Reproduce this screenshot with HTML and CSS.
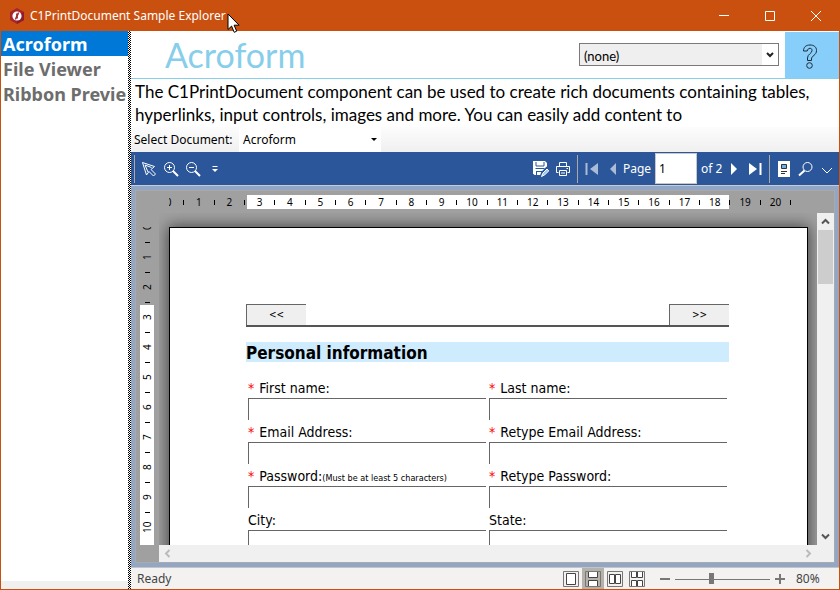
FILE: index.html
```html
<!DOCTYPE html>
<html lang="en">
<head>
<meta charset="utf-8">
<title>C1PrintDocument Sample Explorer</title>
<link rel="stylesheet" href="styles.css">
</head>
<body>
<div class="window">
  <header class="titlebar">
    <svg class="app-icon" width="14" height="16" viewBox="0 0 14 16"><path d="M7 0l7 4v8l-7 4-7-4V4z" fill="#a4262c"/><path d="M7 8l7-4v8l-7 4z" fill="#8c1c30"/><circle cx="7" cy="8" r="4.6" fill="#fff"/><path d="M8.6 4.6L7.2 8v2.4M5.4 11.4L6.8 8V5.6" stroke="#a4262c" stroke-width="1.4" fill="none"/></svg>
    <span class="title">C1PrintDocument Sample Explorer</span>
    <div class="caption-buttons">
      <button aria-label="Minimize"><svg width="12" height="12"><path d="M1 5.5h10" /></svg></button>
      <button aria-label="Maximize"><svg width="12" height="12"><path d="M1.5 1.5h9v9h-9z"/></svg></button>
      <button aria-label="Close"><svg width="12" height="12"><path d="M1 1l10 10M11 1L1 11"/></svg></button>
    </div>
    <svg class="cursor" width="14" height="21" viewBox="0 0 14 21"><path d="M1 1v15.5l3.6-3.4 2.6 6.2 2.5-1.1-2.6-6h5z" fill="#fff" stroke="#000"/></svg>
  </header>

  <div class="body">
    <nav class="samples">
      <a class="sample selected" href="#">Acroform</a>
      <a class="sample" href="#">File Viewer</a>
      <a class="sample" href="#">Ribbon Previe</a>
    </nav>
    <div class="splitter"></div>

    <main class="main">
      <div class="heading">
        <h1>Acroform</h1>
        <select class="theme" aria-label="Theme"><option>(none)</option></select>
        <button class="help" aria-label="Help"><svg width="16" height="26" viewBox="0 0 16 26"><path d="M1.500 7C1.500 3 4 1 8 1s6.500 2 6.500 5.500c0 5-5 5-5 8.500v1.500h-4V14c0-4 4.500-4.500 4.500-7.500C10 5 9.300 4.300 8 4.300S5.500 5.200 5.200 7z"/><circle cx="7.500" cy="21.500" r="2.800"/></svg></button>
      </div>
      <p class="description">The C1PrintDocument component can be used to create rich documents containing tables, hyperlinks, input controls, images and more. You can easily add content to</p>
      <div class="picker">
        <label for="doc">Select Document:</label>
        <select id="doc"><option>Acroform</option></select>
      </div>

      <div class="toolbar">
        <span class="grip"></span>
        <button aria-label="Select"><svg width="16" height="16" viewBox="0 0 16 16"><path d="M1.500 1.500l12 4-3.500 3 4.500 4.500-2 2L8 10.500 5.500 14z"/><path d="M4 4l3 7M4 4l6.500 2.500"/></svg></button>
        <button aria-label="Zoom in"><svg width="16" height="16" viewBox="0 0 16 16"><circle cx="6.500" cy="6.500" r="5"/><path d="M10 10l5 5" stroke-width="2"/><path d="M4 6.500h5M6.500 4v5"/></svg></button>
        <button aria-label="Zoom out"><svg width="16" height="16" viewBox="0 0 16 16"><circle cx="6.500" cy="6.500" r="5"/><path d="M10 10l5 5" stroke-width="2"/><path d="M4 6.500h5"/></svg></button>
        <button aria-label="More tools"><svg width="6" height="8" viewBox="0 0 6 8"><path d="M.5 1.500h5"/><path class="solid" d="M0 4h6L3 7z"/></svg></button>
        <span class="spacer"></span>
        <button aria-label="Save"><svg width="16" height="16" viewBox="0 0 16 16"><path class="solid" d="M0 0h12l2 2v6l-5 6H1.500L0 12.500z"/><path d="M3 1v4h8V1M2.500 7.500h9M3.500 10v4M3.500 10.500h6" stroke="#2b579a"/><path d="M9 15l1-3 5-5" stroke="#2b579a" stroke-width="4"/><path d="M8.500 15.500l1.500-3.500L14 8l1.800 1.800-4 4z" class="pencil"/></svg></button>
        <button aria-label="Print"><svg width="16" height="16" viewBox="0 0 16 16"><path d="M4.500 5V1.500h7V5M3.500 11.500h-2v-6h13v6h-2M4.500 9.500h7v5h-7zM6 12h4M11.500 7.500h1.500"/></svg></button>
        <span class="separator"></span>
        <button aria-label="First page" disabled><svg width="14" height="12" viewBox="0 0 14 12"><path d="M1.500 0v12" stroke-width="2"/><path class="solid" d="M13 0v12L5 6z"/></svg></button>
        <button class="narrow" aria-label="Previous page" disabled><svg width="8" height="12" viewBox="0 0 8 12"><path class="solid" d="M7 0v12L1 6z"/></svg></button>
        <label for="page">Page</label>
        <input id="page" type="text" value="1">
        <span class="count">of 2</span>
        <button class="narrow" aria-label="Next page"><svg width="8" height="12" viewBox="0 0 8 12"><path class="solid" d="M1 0v12l6-6z"/></svg></button>
        <button aria-label="Last page"><svg width="14" height="12" viewBox="0 0 14 12"><path d="M12.500 0v12" stroke-width="2"/><path class="solid" d="M1 0v12l8-6z"/></svg></button>
        <span class="separator"></span>
        <button aria-label="Thumbnails"><svg width="12" height="16" viewBox="0 0 12 16"><path class="solid" d="M0 0h12v16H0z"/><path d="M3.500 3.500h5v4h-5z" stroke="#333" fill="#6db2e8"/><path d="M3 10.500h6M3 12.500h4" stroke="#333"/></svg></button>
        <button aria-label="Find"><svg width="16" height="16" viewBox="0 0 16 16"><circle cx="9.500" cy="6" r="4.500"/><path d="M6.500 9.500L1 14.500" stroke-width="2"/></svg></button>
        <button class="narrow low" aria-label="More"><svg width="12" height="7" viewBox="0 0 12 7"><path d="M1 1l5 5 5-5"/></svg></button>
      </div>

      <div class="viewer">
        <div class="frame">
          <div class="ruler-x"><div class="marks">
            <b>0</b><i></i><b>1</b><i></i><b>2</b><i></i><b>3</b><i></i><b>4</b><i></i><b>5</b><i></i><b>6</b><i></i><b>7</b><i></i><b>8</b><i></i><b>9</b><i></i><b>10</b><i></i><b>11</b><i></i><b>12</b><i></i><b>13</b><i></i><b>14</b><i></i><b>15</b><i></i><b>16</b><i></i><b>17</b><i></i><b>18</b><i></i><b>19</b><i></i><b>20</b><i></i>
          </div></div>
          <div class="ruler-y"><div class="marks">
            <b>0</b><i></i><b>1</b><i></i><b>2</b><i></i><b>3</b><i></i><b>4</b><i></i><b>5</b><i></i><b>6</b><i></i><b>7</b><i></i><b>8</b><i></i><b>9</b><i></i><b>10</b>
          </div></div>
          <div class="canvas">
            <article class="page">
              <div class="pager"><button>&lt;&lt;</button><button>&gt;&gt;</button></div>
              <h2>Personal information</h2>
              <form class="fields">
                <div class="field"><label for="f1"><em>*</em> First name:</label><input id="f1" type="text"></div>
                <div class="field"><label for="f2"><em>*</em> Last name:</label><input id="f2" type="text"></div>
                <div class="field"><label for="f3"><em>*</em> Email Address:</label><input id="f3" type="text"></div>
                <div class="field"><label for="f4"><em>*</em> Retype Email Address:</label><input id="f4" type="text"></div>
                <div class="field"><label for="f5"><em>*</em> Password:<small>(Must be at least 5 characters)</small></label><input id="f5" type="password"></div>
                <div class="field"><label for="f6"><em>*</em> Retype Password:</label><input id="f6" type="password"></div>
                <div class="field"><label for="f7">City:</label><input id="f7" type="text"></div>
                <div class="field"><label for="f8">State:</label><input id="f8" type="text"></div>
              </form>
            </article>
          </div>
          <div class="scroll-y">
            <button aria-label="Scroll up"><svg width="9" height="7" viewBox="0 0 9 7"><path d="M1 5.500L4.500 2 8 5.500"/></svg></button>
            <span class="thumb"></span>
            <button aria-label="Scroll down"><svg width="9" height="7" viewBox="0 0 9 7"><path d="M1 1.500L4.500 5 8 1.500"/></svg></button>
          </div>
          <div class="scroll-x">
            <button aria-label="Scroll left"><svg width="7" height="9" viewBox="0 0 7 9"><path d="M5.500 1L2 4.500 5.500 8"/></svg></button>
            <button aria-label="Scroll right"><svg width="7" height="9" viewBox="0 0 7 9"><path d="M1.500 1L5 4.500 1.500 8"/></svg></button>
          </div>
        </div>
      </div>

      <footer class="status">
        <span class="ready">Ready</span>
        <button aria-label="Single page"><svg width="16" height="16" viewBox="0 0 16 16"><path class="box" d="M.5 .5h15v15H.5z"/><path class="sheet" d="M3.500 2.500h9v11h-9z"/></svg></button>
        <button class="on" aria-label="Continuous"><svg width="16" height="16" viewBox="0 0 16 16"><path class="box" d="M.5 .5h15v15H.5z"/><path class="sheet" d="M3.500 1v5.500h9V1M3.500 15V9.500h9V15"/></svg></button>
        <button aria-label="Facing pages"><svg width="16" height="16" viewBox="0 0 16 16"><path class="box" d="M.5 .5h15v15H.5z"/><path class="sheet" d="M2.500 3.500h5v9h-5zM8.500 3.500h5v9h-5z"/></svg></button>
        <button aria-label="Facing continuous"><svg width="16" height="16" viewBox="0 0 16 16"><path class="box" d="M.5 .5h15v15H.5z"/><path class="sheet" d="M2.500 1v5.500h5V1M8.500 1v5.500h5V1M2.500 15V9.500h5V15M8.500 15V9.500h5V15"/></svg></button>
        <span class="zoom">
          <button aria-label="Zoom out"><svg width="10" height="10"><path class="sign" d="M0 5h10"/></svg></button>
          <input type="range" min="0" max="100" value="38" aria-label="Zoom">
          <button aria-label="Zoom in"><svg width="10" height="10"><path class="sign" d="M0 5h10M5 0v10"/></svg></button>
          <span class="percent">80%</span>
        </span>
      </footer>
    </main>
  </div>
</div>
</body>
</html>
```
FILE: styles.css
```css
* { box-sizing: border-box; }
html, body { height: 100%; margin: 0; }
body { font: 12px/16px "Noto Sans", sans-serif; color: #000; overflow: hidden; }
button { padding: 0; border: 0; background: none; font: inherit; color: inherit; display: flex; align-items: center; justify-content: center; }
svg { display: block; fill: none; }

.window { height: 100vh; display: flex; flex-direction: column; border: 1px solid #c8510f; border-top: 0; background: #f0f0f0; }

.titlebar { position: relative; flex: none; height: 31px; display: flex; align-items: center; padding-left: 9px; background: #ca5010; color: #fff; }
.title { flex: 1; margin-left: 6px; padding-top: 1px; }
.caption-buttons { display: flex; height: 100%; }
.caption-buttons button { width: 46px; }
.caption-buttons svg { stroke: #fff; }
.cursor { position: absolute; left: 226px; top: 13px; z-index: 2; }

.body { flex: 1; min-height: 0; display: flex; }
.samples { width: 127px; margin-bottom: 8px; background: #fff; overflow: hidden; }
.sample { display: block; height: 25px; padding-left: 2px; font: bold 18px/27px "Noto Sans", sans-serif; color: #6d6d6d; text-decoration: none; white-space: nowrap; }
.sample.selected { background: #0078d7; color: #fff; }
.splitter { width: 3px; background: repeating-conic-gradient(#000 0 25%, #fff 0 50%) 0 0 / 2px 2px; }

.main { flex: 1; min-width: 0; display: flex; flex-direction: column; background: #fff; }
.heading { flex: none; height: 48px; display: flex; align-items: center; border-bottom: 1px solid #87ceeb; }
.heading h1 { flex: 1; margin: 0 0 0 34px; font: 34px/40px Lato, sans-serif; color: #87ceeb; }
.theme { appearance: none; width: 200px; height: 23px; margin-right: 6px; padding: 2px 4px 0; border: 1px solid #7a7a7a; border-radius: 0; font: 13px/18px Lato, sans-serif; color: #000;
  background: url("data:image/svg+xml,%3Csvg xmlns='http://www.w3.org/2000/svg' width='16' height='21'%3E%3Cpath fill='%23fff' d='M0 0h16v21H0z'/%3E%3Cpath d='M5 9l3 3 3-3' fill='none' stroke='%23222' stroke-width='2'/%3E%3C/svg%3E") right center no-repeat #efefef; }
.help { width: 54px; height: 46px; padding: 4px 4px 0 0; background: #87cefa; }
.help svg { stroke: #1d2b38; }

.description { flex: none; height: 48px; margin: 0; padding: 1px 4px 0; font: 17px/23px Lato, sans-serif; }
.picker { flex: none; height: 25px; display: flex; align-items: center; background: linear-gradient(#fcfcfc, #f0f0f0); }
.picker label { width: 108px; padding-left: 3px; white-space: nowrap; }
.picker select { appearance: none; width: 142px; height: 25px; border: 0; padding: 0 4px; font: inherit;
  background: url("data:image/svg+xml,%3Csvg xmlns='http://www.w3.org/2000/svg' width='12' height='6'%3E%3Cpath d='M2 1h6L5 4z'/%3E%3C/svg%3E") right center no-repeat #fff; }

.toolbar { flex: none; height: 34px; display: flex; align-items: center; padding: 0 2px 0 3px; background: #2b579a; border-bottom: 1px solid #c8ccd2; color: #fff; }
.toolbar button { width: 22px; height: 32px; flex: none; }
.toolbar .narrow { width: 20px; }
.toolbar .low { padding-top: 4px; }
.toolbar svg { stroke: #fff; }
.toolbar .solid { fill: #fff; stroke: none; }
.toolbar .pencil { fill: #9cc8ee; stroke: #fff; }
.toolbar button:disabled { opacity: .6; }
.toolbar label { width: 32px; }
.toolbar input { width: 42px; height: 31px; padding: 0 3px; border: 1px solid #c8c8c8; font: inherit; }
.count { width: 27px; padding-left: 4px; white-space: nowrap; }
.spacer { flex: 1; }
.grip, .separator { width: 1px; height: 28px; background: #a9a9a9; }
.grip { margin-right: 3px; }
.separator { margin: 0 3px; }

.viewer { flex: 1; min-height: 0; padding: 4px; background: #92a7c6; display: flex; border-bottom: 1px solid #c4c4c4; }
.frame { flex: 1; min-width: 0; display: grid; grid-template: 22px minmax(0, 1fr) 17px / 23px minmax(0, 1fr) 17px; border: 1px solid #aaa; background: #a0a0a0; }
.ruler-x { grid-area: 1 / 2 / 2 / 4; padding: 4px 36px 4px 10px; overflow: hidden; }
.ruler-x .marks { display: flex; height: 14px; overflow: hidden; background: linear-gradient(#fff, #fff) 78px 0 / 482px 100% no-repeat; }
.marks { font-size: 10px; line-height: 14px; }
.marks b { font-weight: normal; display: flex; justify-content: center; }
.marks > :first-child { margin: 0 0 0 -8px; }
.ruler-x b, .ruler-x i { flex: 1; width: 0; }
.ruler-x i::after { content: ""; display: block; width: 1px; height: 5px; margin: 5px auto 0; background: #000; }
.ruler-y { grid-area: 2 / 1 / 3 / 2; padding: 14px 5px 0 4px; overflow: hidden; }
.ruler-y .marks { display: flex; flex-direction: column; height: 100%; overflow: hidden; background: linear-gradient(#fff, #fff) 0 78px / 100% 100% no-repeat; }
.ruler-y .marks > :first-child { margin: -7px 0 0; }
.ruler-y b { flex: none; writing-mode: vertical-rl; transform: rotate(180deg); height: 15px; line-height: 14px; }
.ruler-y i { flex: none; height: 15px; }
.ruler-y i::after { content: ""; display: block; width: 5px; height: 1px; margin: 7px auto 0; background: #000; }

.canvas { grid-area: 2 / 2 / 3 / 3; padding: 14px 9px 0 10px; overflow: hidden; }
.page { height: 900px; padding: 76px 78px 0 76px; border: 1px solid #000; background: #fff; box-shadow: 0 0 14px 1px #444; font: 14px/20px "DejaVu Sans Condensed", sans-serif; }
.pager { display: flex; justify-content: space-between; height: 23px; border-bottom: 2px solid #555; }
.pager button { width: 60px; background: #efefef; border-top: 1px solid #666; border-left: 1px solid #666; font-size: 10px; }
.page h2 { margin: 15px 0 16px; height: 20px; background: #cfecff; font: bold 17px/22px "DejaVu Sans Condensed", sans-serif; }
.fields { display: grid; grid-template-columns: 1fr 1fr; column-gap: 3px; padding: 0 2px 0 2px; }
.field { height: 44px; }
.field label { display: block; height: 20px; line-height: 20px; white-space: nowrap; }
.field em { padding: 0 1px 0 0; font-style: normal; color: #f00; }
.field small { font-size: 9px; }
.field input { display: block; width: 100%; height: 22px; padding: 0 4px; border: solid #666; border-width: 1px 0 0 1px; font: inherit; }

.scroll-y { grid-area: 2 / 3 / 3 / 4; display: flex; flex-direction: column; background: #f0f0f0; }
.scroll-x { grid-area: 3 / 2 / 4 / 4; display: flex; justify-content: space-between; padding-right: 17px; background: #f0f0f0; }
.scroll-y button, .scroll-x button { width: 17px; height: 17px; }
.scroll-y svg { stroke: #555; stroke-width: 2; }
.scroll-x svg { stroke: #bbb; stroke-width: 2; }
.thumb { height: 54px; margin: 0 1px; background: #cdcdcd; }
.scroll-y button:last-child { margin-top: auto; }

.status { flex: none; height: 21px; display: flex; align-items: center; background: #f3f2f0; color: #444; }
.ready { flex: 1; padding-left: 6px; }
.status button { width: 22px; height: 21px; }
.status .on { background: #b5b1ab; }
.status .box { stroke: #777; }
.status .sheet { stroke: #444; fill: #fff; }
.zoom { display: flex; align-items: center; margin-left: 7px; }
.zoom button { width: 20px; }
.sign { stroke: #777; stroke-width: 2; }
.zoom input { appearance: none; width: 95px; height: 12px; margin: 0; background: linear-gradient(#777, #777) 0 6px / 100% 1px no-repeat; }
.zoom input::-webkit-slider-thumb { appearance: none; width: 5px; height: 11px; background: #777; }
.percent { width: 49px; padding-left: 6px; }
```
